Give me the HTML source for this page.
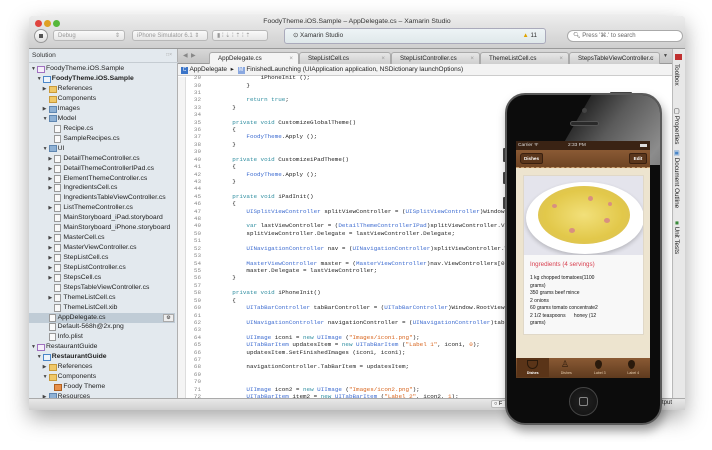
<!DOCTYPE html>
<html><head><meta charset="utf-8"><style>
*{margin:0;padding:0;box-sizing:border-box}
body{width:712px;height:450px;background:#fff;position:relative;overflow:hidden;font-family:"Liberation Sans",sans-serif}
.a{position:absolute}
#win{left:29px;top:16px;width:656px;height:394px;background:#dcdcdc;box-shadow:0 8px 22px rgba(0,0,0,.35);border-radius:4px 4px 0 0;overflow:hidden}
.title{left:0;top:0;width:656px;height:33px;background:linear-gradient(#ececec,#cfcfcf);border-bottom:1px solid #999}
.dot{width:7px;height:7px;border-radius:50%;top:4px}
.combo{height:11px;top:14px;border:1px solid #b8b8b8;border-radius:3px;background:linear-gradient(#fafafa,#e6e6e6);font-size:6px;color:#999;padding:1px 4px;line-height:8px}
#side{left:0;top:33px;width:149px;height:349px;background:#e3e9ee;border-right:1px solid #b0b0b0;font-size:6.8px;color:#222}
.row{position:absolute;height:10px;line-height:10px;white-space:nowrap}
.tri{position:absolute;font-size:5px;color:#444}
.ic{position:absolute;width:8px;height:7px;top:1.5px}
.f{background:#f0c868;border:1px solid #c99a3a}
.bf{background:#8fb1d4;border:1px solid #5f86b0}
.fi{background:#fafafa;border:1px solid #999;width:7px;height:8px;top:1px}
.sol{background:#f5eefa;border:1px solid #a070c0}
.pr{background:#eef4fb;border:1px solid #4a86c8}
#ed{left:149px;top:33px;width:494px;height:349px;background:#fff}
.tab{top:3px;height:12px;font-size:6.2px;line-height:12px;padding-left:8px;color:#222;background:linear-gradient(#e6e6e6,#cfcfcf);border:1px solid #aaa;border-bottom:none;border-radius:3px 3px 0 0}
.tab i{position:absolute;right:5px;font-style:normal;color:#999}
#code{left:0;top:44px;width:494px;height:305px;overflow:hidden;font-family:"Liberation Mono",monospace;font-size:5.9px;line-height:7.42px;white-space:pre;color:#222}
.k{color:#2f8ea0}.t{color:#3c6bd0}.s{color:#d8641c}.n{color:#d8641c}
.ln{position:absolute;left:0;width:23px;text-align:right;color:#888}
.cl{position:absolute;left:26px}
</style></head><body>
<div id="win" class="a">
 <div class="a title">
  <div class="a dot" style="left:6px;background:#e0443e"></div>
  <div class="a dot" style="left:15px;background:#dfa023"></div>
  <div class="a dot" style="left:24px;background:#56b83a"></div>
  <div class="a" style="left:0;width:656px;top:2px;text-align:center;font-size:6.8px;color:#333">FoodyTheme.iOS.Sample – AppDelegate.cs – Xamarin Studio</div>
  <div class="a" style="left:5px;top:13px;width:14px;height:14px;border-radius:50%;border:1px solid #999;background:linear-gradient(#fff,#ddd)"><div class="a" style="left:4px;top:4px;width:4px;height:4px;background:#555"></div></div>
  <div class="a combo" style="left:24px;width:72px">Debug<span style="float:right">⇕</span></div>
  <div class="a combo" style="left:103px;width:76px">iPhone Simulator 6.1 ⇕</div>
  <div class="a combo" style="left:183px;width:56px">▮ ⁞ ⇣ ⁞ ⇡ ⁞ ⇡</div>
  <div class="a" style="left:255px;top:12px;width:262px;height:16px;border:1px solid #aab;border-radius:3px;background:linear-gradient(#eef4f6,#dfe8ea);font-size:6.3px;line-height:14px;padding-left:8px;color:#333">⊙ Xamarin Studio<span style="position:absolute;right:8px;color:#333"><span style="color:#e0a400">▲</span> 11</span></div>
  <div class="a" style="left:538px;top:14px;width:116px;height:12px;border:1px solid #aaa;border-radius:6px;background:#fff;font-size:6px;line-height:10px;padding-left:5px;color:#666">🔍︎ Press '⌘.' to search</div>
 </div>
 <div id="side" class="a">
  <div class="a" style="left:3px;top:3px;font-size:6.6px;color:#333">Solution</div>
  <div class="a" style="right:5px;top:3px;font-size:5px;color:#aaa">□×</div>
  <div class="a" style="left:0;top:13px;width:149px;height:1px;background:#c5ccd2"></div>
  <div class="a" style="left:0;top:263.5px;width:146px;height:10px;background:#c0ccd6"></div>
  <div class="a" style="left:134px;top:264.5px;width:11px;height:8px;border:1px solid #aaa;background:#eee;font-size:5px;line-height:6px;text-align:center">⚙</div>
  <div id="rows"></div>
 </div>
 <div id="ed" class="a">
  <div class="a" style="left:0;top:0;width:494px;height:15px;background:linear-gradient(#d8d8d8,#c4c4c4);border-bottom:1px solid #999"></div>
  <div class="a" style="left:5px;top:3px;font-size:6px;color:#888">◀ &nbsp;▶</div>
  <div class="a tab" style="left:31px;width:90px;background:#f4f4f4;z-index:2">AppDelegate.cs<i>×</i></div>
  <div class="a tab" style="left:121px;width:92px">StepListCell.cs<i>×</i></div>
  <div class="a tab" style="left:213px;width:89px">StepListController.cs<i>×</i></div>
  <div class="a tab" style="left:302px;width:89px">ThemeListCell.cs<i>×</i></div>
  <div class="a tab" style="left:391px;width:91px">StepsTableViewController.c<i>×</i></div>
  <div class="a" style="left:485px;top:4px;font-size:5px;color:#444">▼</div>
  <div class="a" style="left:0;top:15px;width:494px;height:12px;background:#f3f3f3;border-bottom:1px solid #ccc;font-size:6.5px;line-height:12px;color:#222;padding-left:3px"><span style="display:inline-block;width:7px;height:7px;background:#3a74c8;color:#fff;font-size:5px;line-height:7px;text-align:center">C</span> AppDelegate &nbsp;▸ &nbsp;<span style="display:inline-block;width:7px;height:7px;background:#8aa8e0;color:#fff;font-size:5px;line-height:7px;text-align:center">M</span> FinishedLaunching (UIApplication application, NSDictionary launchOptions)</div>
  <div class="a" style="left:0;top:28px;width:8px;height:321px;background:#f4f4f4;border-right:1px solid #ddd"></div>
  <div id="code" class="a" style="top:26px;height:323px"></div>
 </div>
 <div class="a" style="left:643px;top:33px;width:13px;height:349px;background:#e8e8e8;border-left:1px solid #bbb"></div>
 <div class="a" style="left:646px;top:38px;width:7px;height:6px;background:#c03030"></div>
 <div class="a" style="left:651px;top:48px;transform:rotate(90deg);transform-origin:0 0;font-size:6.3px;color:#222;white-space:nowrap">Toolbox</div>
 <div class="a" style="left:651px;top:92px;transform:rotate(90deg);transform-origin:0 0;font-size:6.3px;color:#222;white-space:nowrap">▢ Properties</div>
 <div class="a" style="left:651px;top:134px;transform:rotate(90deg);transform-origin:0 0;font-size:6.3px;color:#222;white-space:nowrap"><span style="color:#4a86c8">▣</span> Document Outline</div>
 <div class="a" style="left:651px;top:205px;transform:rotate(90deg);transform-origin:0 0;font-size:6.3px;color:#222;white-space:nowrap"><span style="color:#3a8a3a">■</span> Unit Tests</div>
 <div class="a" style="left:0;top:382px;width:656px;height:12px;background:linear-gradient(#e8e8e8,#d0d0d0);border-top:1px solid #aaa"></div>
 <div class="a" style="left:462px;top:384px;width:20px;height:8px;border:1px solid #bbb;border-radius:2px;background:#f4f4f4;font-size:5.5px;line-height:6px;padding-left:2px">○ F</div>
 <div class="a" style="left:633px;top:384px;font-size:6px;color:#222">tput</div>
</div>

<!-- phone -->
<div class="a" style="left:503px;top:148px;width:3px;height:14px;background:#444;border-radius:1px"></div>
<div class="a" style="left:503px;top:172px;width:3px;height:12px;background:#444;border-radius:1px"></div>
<div class="a" style="left:503px;top:197px;width:3px;height:12px;background:#444;border-radius:1px"></div>
<div class="a" style="left:610px;top:92px;width:22px;height:3px;background:#444;border-radius:1px"></div>
<div class="a" style="left:505px;top:93px;width:157px;height:332px;border-radius:20px;background:#0c0c0c;border:2px solid #5a5a5a;box-shadow:2px 6px 10px rgba(0,0,0,.35);overflow:hidden">
 <div class="a" style="left:70px;top:-20px;width:140px;height:90px;background:linear-gradient(100deg,#222 0%,#5a5a5a 30%,#8c8c8c 70%,#6a6a6a 100%);transform:skewX(-30deg)"></div>
 <div class="a" style="left:75px;top:13px;width:5px;height:5px;border-radius:50%;background:#444"></div>
 <div class="a" style="left:63px;top:26px;width:29px;height:5px;border-radius:3px;background:#2a2a2a;border:1px solid #555"></div>
 <div class="a" style="left:62px;top:292px;width:29px;height:29px;border-radius:50%;background:radial-gradient(#222,#111);border:1px solid #444"><div class="a" style="left:9px;top:9px;width:9px;height:9px;border:1px solid #888;border-radius:2px"></div></div>
</div>
<div class="a" style="left:516px;top:141px;width:134px;height:237px;background:#ede4cf;overflow:hidden;font-family:'Liberation Sans',sans-serif">
 <div class="a" style="left:0;top:0;width:134px;height:9px;background:#3a2314;color:#ddd;font-size:4.8px;line-height:9px;padding-left:2px">Carrier ᯤ<span style="position:absolute;left:52px">2:33 PM</span><span style="position:absolute;right:3px;top:3px;width:7px;height:3px;background:#ddd"></span></div>
 <div class="a" style="left:0;top:9px;width:134px;height:18px;background:linear-gradient(#8a5a34,#6e4424);border-bottom:1px dashed #c9a070"></div>
 <div class="a" style="left:4px;top:12px;width:23px;height:11px;border-radius:3px 2px 2px 3px;background:#5a361c;border:1px solid #3a2010;color:#fff;font-size:4.6px;font-weight:bold;line-height:9px;text-align:center">Dishes</div>
 <div class="a" style="left:113px;top:12px;width:18px;height:11px;border-radius:2px;background:#5a361c;border:1px solid #3a2010;color:#fff;font-size:4.6px;font-weight:bold;line-height:9px;text-align:center">Edit</div>
 <div class="a" style="left:7px;top:34px;width:121px;height:160px;background:#f8f8f8;border:1px solid #e0d8c8"></div>
 <div class="a" style="left:8px;top:35px;width:119px;height:79px;background:#e4e4ec;overflow:hidden">
  <div class="a" style="left:2px;top:6px;width:118px;height:72px;border-radius:50%;background:#fff;box-shadow:0 2px 4px rgba(0,0,0,.2)"></div>
  <div class="a" style="left:14px;top:10px;width:92px;height:58px;border-radius:50%;background:radial-gradient(#f2e07a,#e2c84a 60%,#d8c060)"></div>
  <div class="a" style="left:28px;top:28px;width:5px;height:4px;border-radius:50%;background:#d89080"></div>
  <div class="a" style="left:64px;top:20px;width:5px;height:5px;border-radius:50%;background:#d89080"></div>
  <div class="a" style="left:80px;top:42px;width:6px;height:5px;border-radius:50%;background:#d89080"></div>
  <div class="a" style="left:45px;top:52px;width:6px;height:5px;border-radius:50%;background:#d89080"></div>
  <div class="a" style="left:84px;top:26px;width:4px;height:4px;border-radius:50%;background:#d89080"></div>
 </div>
 <div class="a" style="left:14px;top:120px;font-size:6.2px;color:#d84050;white-space:nowrap">Ingredients (4 servings)</div>
 <div class="a" style="left:14px;top:134px;font-size:5px;line-height:7.5px;color:#111;white-space:pre">1 kg chopped tomatoes(1100
grams)
350 grams beef mince
2 onions
60 grams tomato concentrate2
2 1/2 teaspoons      honey (12
grams)</div>
 <div class="a" style="left:0;top:217px;width:134px;height:20px;background:linear-gradient(#8a5a34,#5e3a1e)"></div>
 <div class="a" style="left:1px;top:217px;width:32px;height:19px;background:#5a3418"></div>
 <div class="a" style="left:0;top:217px;width:134px;height:20px;font-size:3.6px;color:#e8d0b0;display:flex">
  <div style="flex:1;text-align:center;padding-top:13px;color:#fff;font-weight:bold">Dishes</div>
  <div style="flex:1;text-align:center;padding-top:13px">Dishes</div>
  <div style="flex:1;text-align:center;padding-top:13px">Label 3</div>
  <div style="flex:1;text-align:center;padding-top:13px">Label 4</div>
 </div>
 <div class="a" style="left:11px;top:219px;width:11px;height:9px;border:1.5px solid #2a1a0c;border-radius:0 0 6px 6px"></div>
 <div class="a" style="left:45px;top:219px;width:9px;height:10px;font-size:9px;line-height:9px;color:#2a1a0c">♙</div>
 <div class="a" style="left:79px;top:219px;width:7px;height:9px;border-radius:50% 50% 50% 50%/40% 40% 60% 60%;background:#2a1a0c"></div>
 <div class="a" style="left:112px;top:219px;width:7px;height:9px;border-radius:50% 50% 50% 50%/40% 40% 60% 60%;background:#2a1a0c"></div>
</div>

<script>
var rows=[
[0,1,'sol','FoodyTheme.iOS.Sample'],[1,1,'pr','<b>FoodyTheme.iOS.Sample</b>'],[2,2,'f','References'],[2,0,'f','Components'],[2,2,'bf','Images'],[2,1,'bf','Model'],[3,0,'fi','Recipe.cs'],[3,0,'fi','SampleRecipes.cs'],[2,1,'bf','UI'],
[3,2,'fi','DetailThemeController.cs'],[3,2,'fi','DetailThemeControllerIPad.cs'],[3,2,'fi','ElementThemeController.cs'],[3,2,'fi','IngredientsCell.cs'],[3,0,'fi','IngredientsTableViewController.cs'],[3,2,'fi','ListThemeController.cs'],[3,0,'fi','MainStoryboard_iPad.storyboard'],[3,0,'fi','MainStoryboard_iPhone.storyboard'],[3,2,'fi','MasterCell.cs'],[3,2,'fi','MasterViewController.cs'],[3,2,'fi','StepListCell.cs'],[3,2,'fi','StepListController.cs'],[3,2,'fi','StepsCell.cs'],[3,0,'fi','StepsTableViewController.cs'],[3,2,'fi','ThemeListCell.cs'],[3,0,'fi','ThemeListCell.xib'],
[2,0,'fi','AppDelegate.cs'],[2,0,'fi','Default-568h@2x.png'],[2,0,'fi','Info.plist'],[0,1,'sol','RestaurantGuide'],[1,1,'pr','<b>RestaurantGuide</b>'],[2,2,'f','References'],[2,1,'f','Components'],[3,0,'or','Foody Theme'],[2,2,'bf','Resources']];
var h='';rows.forEach(function(r,i){var y=15.3+i*9.93,x=2+r[0]*5.8;
h+='<div class="row" style="top:'+y+'px;left:0;width:149px">';
if(r[1])h+='<span class="tri" style="left:'+x+'px;top:0">'+(r[1]==1?'▼':'▶')+'</span>';
var st=r[2]=='or'?'background:#e8904a;border:1px solid #b06020':'';
h+='<span class="ic '+(r[2]=='or'?'':r[2])+'" style="left:'+(x+6)+'px;'+st+'"></span>';
h+='<span style="position:absolute;left:'+(x+15)+'px">'+r[3]+'</span></div>';});
document.getElementById('rows').innerHTML=h;
var C=[
[29,'                <span>iPhoneInit ();</span>'],[30,'            }'],[31,''],[32,'            <span class="k">return true</span>;'],[33,'        }'],[34,''],
[35,'        <span class="k">private void</span> CustomizeGlobalTheme()'],[36,'        {'],[37,'            <span class="t">FoodyTheme</span>.Apply ();'],[38,'        }'],[39,''],
[40,'        <span class="k">private void</span> CustomizeiPadTheme()'],[41,'        {'],[42,'            <span class="t">FoodyTheme</span>.Apply ();'],[43,'        }'],[44,''],
[45,'        <span class="k">private void</span> iPadInit()'],[46,'        {'],
[47,'            <span class="t">UISplitViewController</span> splitViewController = (<span class="t">UISplitViewController</span>)Window.RootViewController;'],[48,''],
[49,'            <span class="k">var</span> lastViewController = (<span class="t">DetailThemeControllerIPad</span>)splitViewController.ViewControllers[1];'],
[50,'            splitViewController.Delegate = lastViewController.Delegate;'],[51,''],
[52,'            <span class="t">UINavigationController</span> nav = (<span class="t">UINavigationController</span>)splitViewController.ViewControllers[0];'],[53,''],
[54,'            <span class="t">MasterViewController</span> master = (<span class="t">MasterViewController</span>)nav.ViewControllers[0];'],
[55,'            master.Delegate = lastViewController;'],[56,'        }'],[57,''],
[58,'        <span class="k">private void</span> iPhoneInit()'],[59,'        {'],
[60,'            <span class="t">UITabBarController</span> tabBarController = (<span class="t">UITabBarController</span>)Window.RootViewController;'],[61,''],
[62,'            <span class="t">UINavigationController</span> navigationController = (<span class="t">UINavigationController</span>)tabBarController.SelectedViewController;'],[63,''],
[64,'            <span class="t">UIImage</span> icon1 = <span class="k">new</span> <span class="t">UIImage</span> (<span class="s">"Images/icon1.png"</span>);'],
[65,'            <span class="t">UITabBarItem</span> updatesItem = <span class="k">new</span> <span class="t">UITabBarItem</span> (<span class="s">"Label 1"</span>, icon1, <span class="n">0</span>);'],
[66,'            updatesItem.SetFinishedImages (icon1, icon1);'],[67,''],
[68,'            navigationController.TabBarItem = updatesItem;'],[69,''],[70,''],
[71,'            <span class="t">UIImage</span> icon2 = <span class="k">new</span> <span class="t">UIImage</span> (<span class="s">"Images/icon2.png"</span>);'],
[72,'            <span class="t">UITabBarItem</span> item2 = <span class="k">new</span> <span class="t">UITabBarItem</span> (<span class="s">"Label 2"</span>, icon2, <span class="n">1</span>);']];
var c='';C.forEach(function(l){var y=(l[0]-30)*7.42+85.3-16-33-26-3.8;
c+='<div class="ln" style="top:'+y+'px">'+l[0]+'</div><div class="cl" style="top:'+y+'px">'+l[1]+'</div>';});
document.getElementById('code').innerHTML=c;
</script>
</body></html>
